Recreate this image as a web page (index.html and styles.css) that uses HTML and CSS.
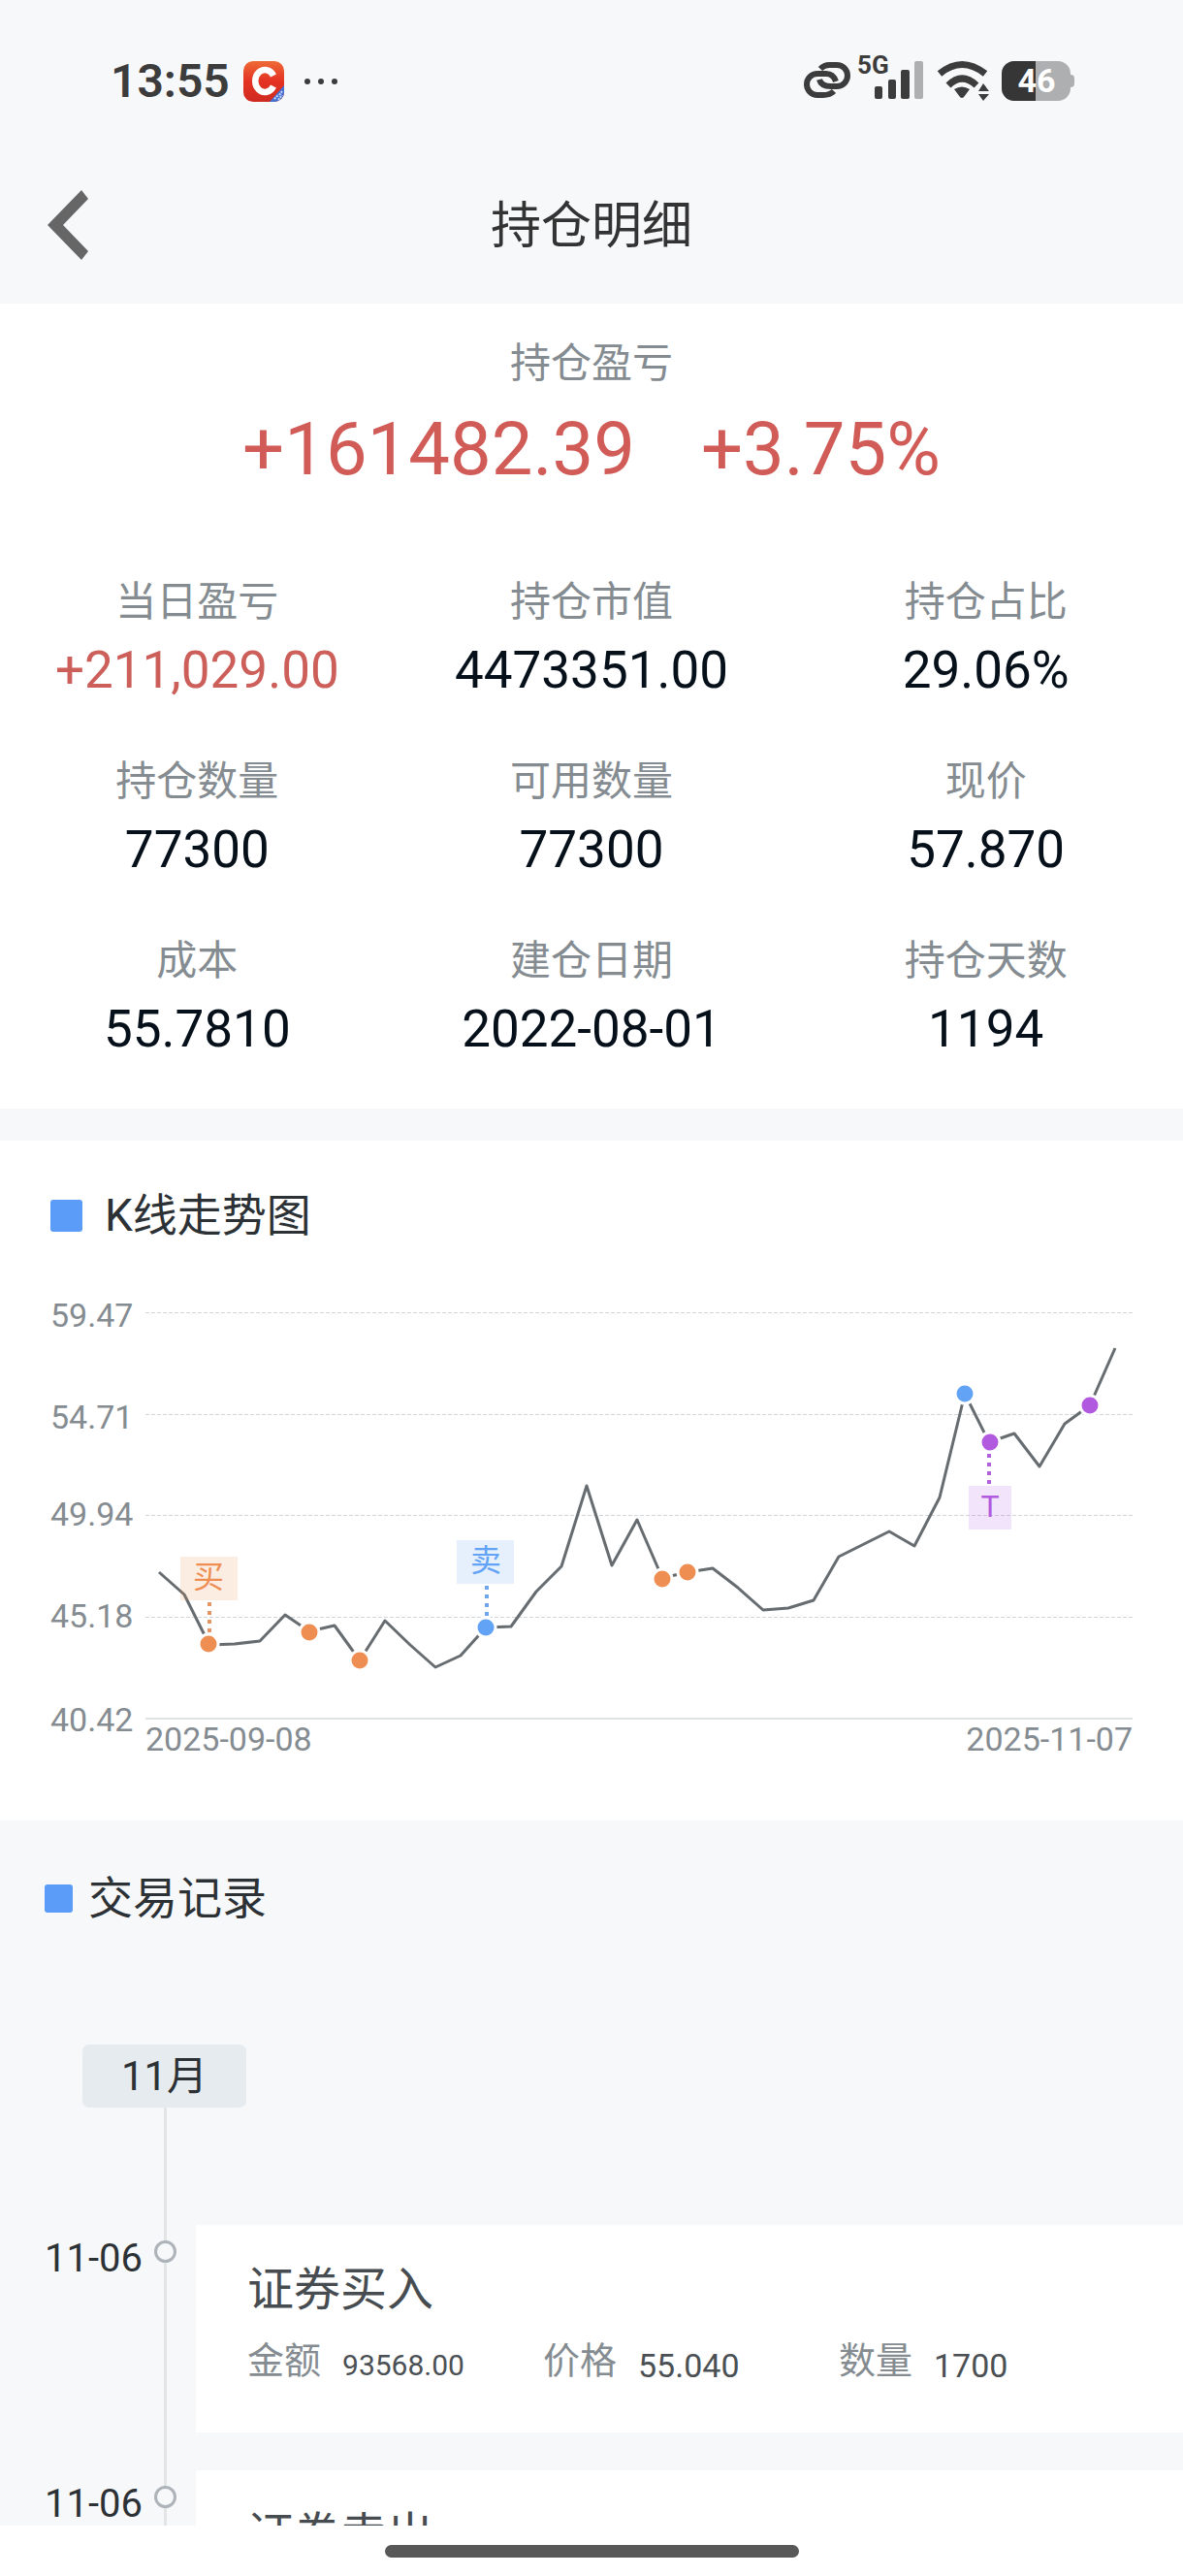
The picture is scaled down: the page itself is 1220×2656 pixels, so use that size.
FILE: index.html
```html
<!DOCTYPE html>
<html lang="zh-CN">
<head>
    <meta charset="UTF-8">
    <meta name="viewport" content="width=device-width, initial-scale=1.0">
    <title>持仓明细</title>
    <link rel="stylesheet" href="styles.css">
</head>
<body>
    <!-- 状态栏 -->
    <div class="status-bar">
        <div class="status-left">
            <span class="time">13:55</span>
            <svg class="app-icon" width="42" height="42" viewBox="0 0 42 42">
                <defs>
                    <linearGradient id="appBg" x1="0" y1="0" x2="0" y2="1">
                        <stop offset="0" stop-color="#ee6a36"/>
                        <stop offset="0.5" stop-color="#e43223"/>
                        <stop offset="1" stop-color="#cf2a20"/>
                    </linearGradient>
                    <clipPath id="appClip"><rect width="42" height="42" rx="10"/></clipPath>
                </defs>
                <g clip-path="url(#appClip)">
                    <rect width="42" height="42" fill="url(#appBg)"/>
                    <path d="M31 15A10 11.500 0 1 0 31 26" fill="none" stroke="#fff" stroke-width="6.500"/>
                    <path d="M42 25V42H27Z" fill="#4470d2"/>
                    <path d="M32 39l4-4M37 35l3-4M36 40l4-5" stroke="#c9d7f7" stroke-width="2" stroke-dasharray="2 1"/>
                </g>
            </svg>
            <svg class="more-dots" width="36" height="8" viewBox="0 0 36 8" fill="#3c3c3c">
                <circle cx="4" cy="4" r="3"/><circle cx="18" cy="4" r="3"/><circle cx="32" cy="4" r="3"/>
            </svg>
        </div>
        <div class="status-right">
            <svg width="126" height="50" viewBox="0 0 126 50">
                <g fill="none" stroke="#3c3c3c" stroke-width="6">
                    <path d="M17 12C20 9 23 8 26 8H34A11 11 0 0 1 34 30H28C21 30 17 27 16 23"/>
                    <path d="M33 25C31 19 27 17 23 17H14A11 11 0 0 0 14 39H20C25 39 28 38 31 35"/>
                </g>
                <text class="net-type" x="55" y="17">5G</text>
                <g fill="#3c3c3c">
                    <rect x="73" y="30" width="8" height="13" rx="2"/>
                    <rect x="87" y="23" width="8" height="20" rx="2"/>
                    <rect x="100" y="13" width="9" height="30" rx="2"/>
                    <rect x="114" y="4" width="9" height="39" rx="2" fill="#aeafb1"/>
                </g>
            </svg>
            <svg width="58" height="42" viewBox="0 0 58 42">
                <g fill="none" stroke="#3c3c3c" stroke-width="7">
                    <path d="M4 13Q27 -6 51 13"/>
                    <path d="M13 25Q27 11 42 25"/>
                </g>
                <path d="M19 29Q27 24 35 29L29 37Q27 39 25 37Z" fill="#3c3c3c"/>
                <path d="M44 31L49 23L55 31ZM44 34H55L49 41Z" fill="#3c3c3c"/>
            </svg>
            <svg width="76" height="42" viewBox="0 0 76 42">
                <defs>
                    <clipPath id="batteryClip"><rect y="0" width="71" height="41" rx="13"/></clipPath>
                </defs>
                <rect x="66" y="14" width="9" height="13" rx="4" fill="#aeafb1"/>
                <g clip-path="url(#batteryClip)">
                    <rect width="71" height="41" fill="#aeafb1"/>
                    <rect width="35" height="41" fill="#363636"/>
                </g>
                <text class="battery-level" x="36" y="32" text-anchor="middle">46</text>
            </svg>
        </div>
    </div>

    <!-- 标题栏 -->
    <header class="nav-bar">
        <button class="back-btn" type="button" aria-label="返回">
            <svg width="42" height="72" viewBox="0 0 42 72"><path d="M35 0L42 9L16 36L42 63L35 72L0 36Z" fill="#666"/></svg>
        </button>
        <h1>持仓明细</h1>
    </header>

    <main class="content">
        <!-- 持仓概况 -->
        <section class="summary">
            <div class="total-label">持仓盈亏</div>
            <div class="total-value"><span>+161482.39</span><span>+3.75%</span></div>
            <dl class="stats">
                <div><dt>当日盈亏</dt><dd class="up">+211,029.00</dd></div>
                <div><dt>持仓市值</dt><dd>4473351.00</dd></div>
                <div><dt>持仓占比</dt><dd>29.06%</dd></div>
                <div><dt>持仓数量</dt><dd>77300</dd></div>
                <div><dt>可用数量</dt><dd>77300</dd></div>
                <div><dt>现价</dt><dd>57.870</dd></div>
                <div><dt>成本</dt><dd>55.7810</dd></div>
                <div><dt>建仓日期</dt><dd>2022-08-01</dd></div>
                <div><dt>持仓天数</dt><dd>1194</dd></div>
            </dl>
        </section>

        <!-- K线走势图 -->
        <section class="trend">
            <h2>K线走势图</h2>
            <svg class="chart" viewBox="0 0 1116 470">
                <g class="grid-line">
                    <path d="M98 13.500H1116"/>
                    <path d="M98 118.500H1116"/>
                    <path d="M98 222.500H1116"/>
                    <path d="M98 327.500H1116"/>
                </g>
                <path class="axis-line" d="M98 432H1116"/>
                <g class="axis-text">
                    <text x="0" y="28">59.47</text>
                    <text x="0" y="133">54.71</text>
                    <text x="0" y="233">49.94</text>
                    <text x="0" y="338">45.18</text>
                    <text x="0" y="445">40.42</text>
                    <text x="98" y="465">2025-09-08</text>
                    <text x="1116" y="465" text-anchor="end">2025-11-07</text>
                </g>
                <polyline class="price-line" points="112,281 138,304 164,356 190,355 216,352 242,325 267,342 293,336 319,372 345,331 371,356 397,379 423,367 449,338 475,337 501,301 527,275 553,192 579,274 605,227 631,287 657,281 683,277 709,297 735,320 761,318 787,310 813,265 839,252 865,239 891,254 917,204 943,97 968,147 994,138 1020,172 1046,128 1072,109 1098,50"/>
                <g class="mark buy">
                    <rect x="134" y="265" width="59" height="45"/>
                    <path d="M164 312V345"/>
                    <text x="163" y="297">买</text>
                    <circle cx="163" cy="355" r="10"/>
                    <circle cx="267" cy="343" r="10"/>
                    <circle cx="319" cy="372" r="10"/>
                    <circle cx="631" cy="288" r="10"/>
                    <circle cx="657" cy="281" r="10"/>
                </g>
                <g class="mark sell">
                    <rect x="419" y="248" width="59" height="45"/>
                    <path d="M450 295V327"/>
                    <text x="449" y="280">卖</text>
                    <circle cx="449" cy="338" r="10"/>
                    <circle cx="943" cy="97" r="10"/>
                </g>
                <g class="mark both">
                    <rect x="947" y="192" width="44" height="45"/>
                    <path d="M968 159V191"/>
                    <text x="969" y="224">T</text>
                    <circle cx="969" cy="147" r="10"/>
                    <circle cx="1072" cy="109" r="10"/>
                </g>
            </svg>
        </section>

        <!-- 交易记录 -->
        <section class="records">
            <h2>交易记录</h2>
            <div class="timeline">
                <div class="month">11月</div>
                <article class="record">
                    <time datetime="2025-11-06">11-06</time>
                    <span class="node"></span>
                    <div class="card">
                        <h3>证券买入</h3>
                        <dl>
                            <div><dt>金额</dt><dd class="amount">93568.00</dd></div>
                            <div><dt>价格</dt><dd>55.040</dd></div>
                            <div><dt>数量</dt><dd>1700</dd></div>
                        </dl>
                    </div>
                </article>
                <article class="record">
                    <time datetime="2025-11-06">11-06</time>
                    <span class="node"></span>
                    <div class="card">
                        <h3>证券卖出</h3>
                    </div>
                </article>
            </div>
        </section>
    </main>

    <div class="home-bar"><span></span></div>
</body>
</html>
```
FILE: styles.css
```css
* {
    box-sizing: border-box;
    margin: 0;
    padding: 0;
}
body {
    display: flex;
    flex-direction: column;
    height: 100vh;
    font-family: Roboto, "Noto Sans CJK SC", sans-serif;
    font-size: 42px;
    color: #2c3135;
    background-color: #f7f8fa;
}
h1, h2, h3 {
    font-weight: normal;
}
svg {
    display: block;
    overflow: visible;
}

/* 状态栏 */
.status-bar {
    display: flex;
    justify-content: space-between;
    align-items: center;
    height: 150px;
    padding: 17px 111px 0 114px;
    flex-shrink: 0;
}
.status-left, .status-right {
    display: flex;
    align-items: center;
}
.time {
    font-size: 48px;
    font-weight: 600;
    line-height: 60px;
    color: #3c3c3c;
}
.app-icon {
    margin-left: 14px;
}
.more-dots {
    margin-left: 20px;
}
.status-right {
    gap: 10px;
}
.net-type {
    font-size: 26px;
    font-weight: bold;
    fill: #3c3c3c;
}
.battery-level {
    font-size: 34px;
    font-weight: bold;
    fill: white;
}

/* 标题栏 */
.nav-bar {
    display: grid;
    grid-template-columns: 1fr auto 1fr;
    align-items: center;
    height: 163px;
    padding: 0 49px;
    flex-shrink: 0;
}
.nav-bar h1 {
    padding-top: 4px;
    font-size: 52px;
    line-height: 80px;
    color: #333;
}
.back-btn {
    justify-self: start;
    background: none;
    border: none;
    cursor: pointer;
}

.content {
    flex: 1;
    min-height: 0;
    overflow: hidden;
}

/* 持仓概况 */
.summary {
    padding: 32px 0 42px;
    text-align: center;
    background-color: white;
}
.total-label, .stats dt {
    line-height: 60px;
    color: #858c91;
}
.total-value {
    display: flex;
    justify-content: center;
    gap: 68px;
    margin-top: 8px;
    font-size: 76px;
    line-height: 100px;
    color: #d15b56;
}
.stats {
    display: grid;
    grid-template-columns: repeat(3, 1fr);
    row-gap: 45px;
    margin-top: 78px;
}
.stats dd {
    font-size: 53px;
    line-height: 80px;
    color: #06101a;
}
.stats .up {
    color: #cd5f5b;
}

/* 小标题,前面带蓝色方块 */
h2 {
    display: flex;
    align-items: center;
    font-size: 46px;
    line-height: 60px;
}
h2::before {
    content: "";
    width: 33px;
    height: 33px;
    margin-right: 23px;
    border-radius: 3px;
    background-color: #5b9cf8;
}

/* 走势图 */
.trend {
    margin-top: 33px;
    padding: 47px 52px 67px;
    background-color: white;
}
.chart {
    width: 100%;
    margin-top: 57px;
}
.grid-line {
    stroke: #d3d6d8;
    stroke-dasharray: 4 2;
}
.axis-line {
    stroke: #dfe3e4;
    stroke-width: 2;
}
.axis-text {
    font-size: 34px;
    fill: #858c91;
}
.price-line {
    fill: none;
    stroke: #666c70;
    stroke-width: 3;
    stroke-linejoin: round;
}
.mark rect {
    fill-opacity: 0.16;
}
.mark path {
    stroke-width: 4;
    stroke-dasharray: 4 5;
}
.mark text {
    font-size: 32px;
    text-anchor: middle;
}
.mark circle {
    stroke: white;
    stroke-width: 3;
}
.buy {
    fill: #ef8e52;
}
.buy path {
    stroke: #e59563;
}
.sell {
    fill: #62a3f5;
}
.sell path {
    stroke: #6fa6ea;
}
.both {
    fill: #b15ae0;
}
.both path {
    stroke: #b260dc;
}

/* 交易记录 */
.records {
    padding-top: 50px;
}
.records h2 {
    padding-left: 46px;
}
.records h2::before {
    width: 29px;
    height: 29px;
    margin-right: 16px;
}
.timeline {
    margin-top: 121px;
    background: linear-gradient(#e1e5e6, #e1e5e6) 169px 0 / 3px 100% no-repeat;
}
.month {
    width: 169px;
    margin: 0 0 121px 85px;
    border-radius: 7px;
    font-size: 42px;
    line-height: 65px;
    text-align: center;
    background-color: #e6ebef;
}
.record {
    display: flex;
    align-items: flex-start;
    margin-bottom: 39px;
}
.record time {
    width: 159px;
    padding: 5px 0 0 46px;
    font-size: 40px;
    line-height: 60px;
}
.node {
    width: 23px;
    height: 23px;
    margin: 16px 20px 0 0;
    border: 3px solid #adb3b8;
    border-radius: 50%;
    background-color: #f7f8fa;
}
.card {
    flex: 1;
    min-height: 214px;
    padding: 37px 0 49px 53px;
    background-color: white;
}
.card h3 {
    font-size: 48px;
    line-height: 60px;
    color: #474c50;
}
.card dl {
    display: grid;
    grid-template-columns: repeat(3, 305px);
    margin-top: 18px;
}
.card dl div {
    display: flex;
    align-items: flex-end;
    gap: 22px;
    line-height: 50px;
}
.card dt {
    font-size: 38px;
    color: #858c91;
}
.card dd {
    font-size: 34px;
    line-height: 40px;
    color: #4b5054;
}
.card .amount {
    font-size: 30px;
}

/* 底部横条 */
.home-bar {
    display: flex;
    justify-content: center;
    align-items: center;
    height: 52px;
    flex-shrink: 0;
    background-color: white;
}
.home-bar span {
    width: 35%;
    height: 13px;
    border-radius: 7px;
    background-color: #585858;
}
```
